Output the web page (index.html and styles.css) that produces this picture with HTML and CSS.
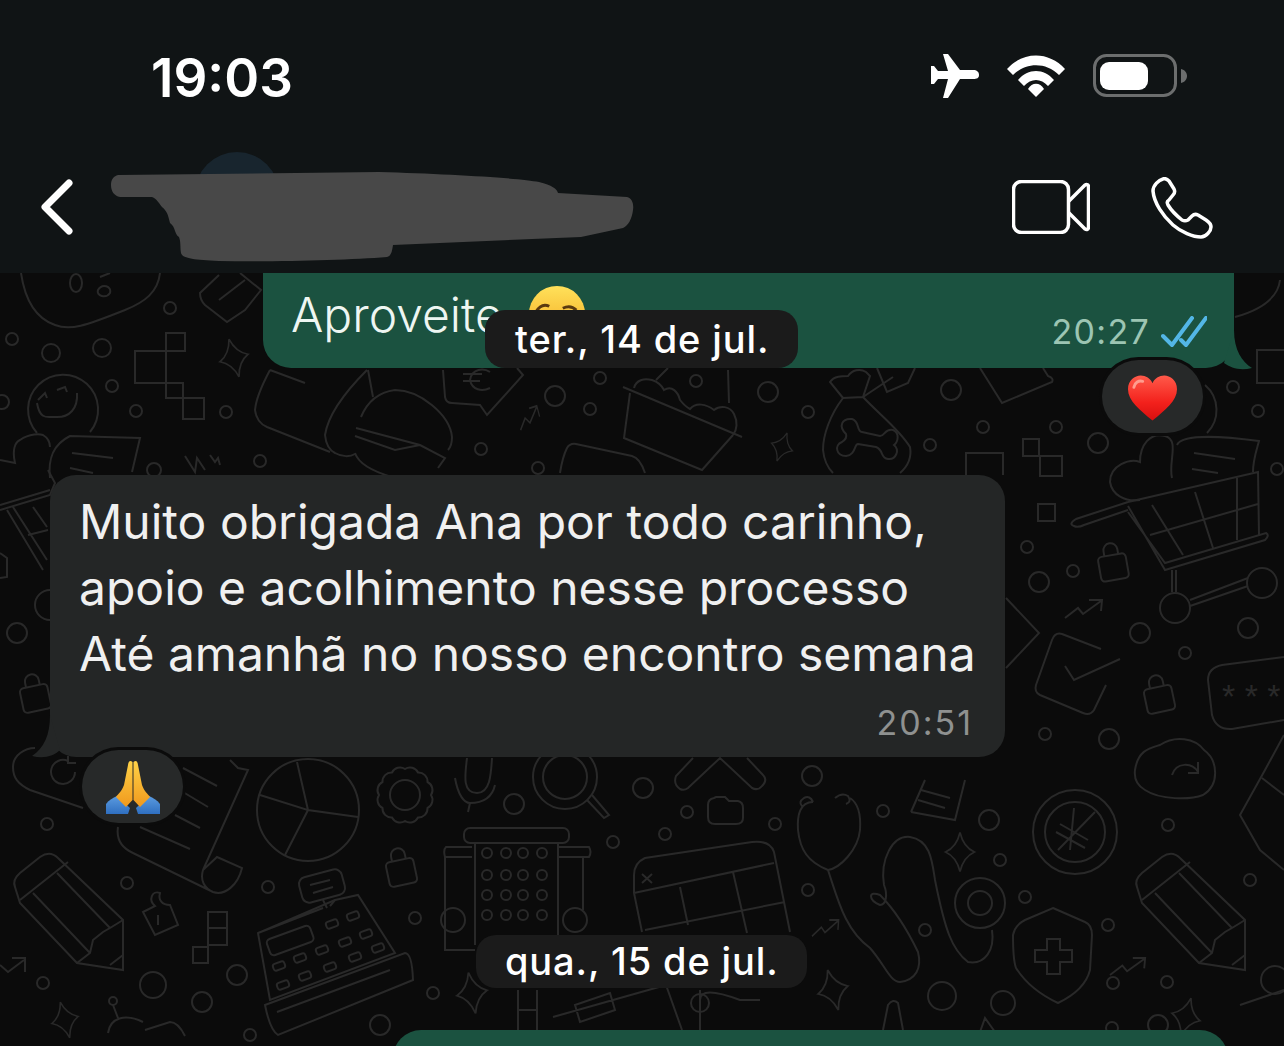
FILE: index.html
```html
<!DOCTYPE html>
<html lang="en">
<head>
    <meta charset="UTF-8">
    <meta name="viewport" content="width=device-width, initial-scale=1.0">
    <title>Chat</title>
    <link rel="stylesheet" href="styles.css">
</head>
<body>
    <div class="phone">
        <header class="top">
            <div class="status">
                <span class="clock">19:03</span>
                <div class="status-icons">
                    <svg class="ic-plane" viewBox="0 0 48 44"><path d="M12 0 17 0 29 16 42 16C46 16 48 18 48 21 48 24 46 25 42 25L29 25 17 44 12 44 17 25 7 25 3 30 0 30 0 12 3 12 7 17 17 17Z"/></svg>
                    <svg class="ic-wifi" viewBox="0 0 58 42"><path d="M0 14C16-4 42-4 58 14L52 20C39 7 19 7 6 20Z"/><path d="M11 25C21 13 37 13 47 25L41 31C34 23 24 23 17 31Z"/><path d="M21 34C25 27 33 27 37 34L29 42Z"/></svg>
                    <svg class="ic-battery" viewBox="0 0 94 44"><rect x="1.5" y="1.5" width="81" height="40" rx="12" fill="none" stroke="#6c6e6e" stroke-width="3"/><rect x="7" y="8" width="48" height="28" rx="9" fill="#fff"/><path d="M88 15C92 16 94 19 94 22 94 25 92 28 88 29Z" fill="#6c6e6e"/></svg>
                </div>
            </div>
            <nav class="nav">
                <svg class="ic-back" viewBox="0 0 34 56"><path d="M29 4 5 28 29 52"/></svg>
                <div class="avatar"></div>
                <div class="nav-icons">
                    <svg class="ic-video" viewBox="0 0 78 54"><rect x="1.5" y="1.5" width="55" height="51" rx="8"/><path d="M57 21 73 5C75 4 76.500 5 76.500 7V47C76.500 49 75 50 73 49L57 33"/></svg>
                    <svg class="ic-call" viewBox="0 0 62 62"><path d="M12 2C8 3 2 8 2 14 3 26 12 39 22 48 30 55 42 60 50 60 55 60 60 54 60 50 60 47 58 45 55 43L47 38C45 37 43 37 41 39L37 43C35 44 33 44 31 43 26 39 20 33 17 28 16 26 16 24 18 23L22 18C24 16 24 14 23 12L18 4C16 2 14 1 12 2Z"/></svg>
                </div>
                <svg class="smear" viewBox="0 0 530 94"><path d="M3 13C3 7 6 4 10 3L271 0C340 2 410 6 431 10 444 13 449 17 450 21L519 25C524 26 526 32 525 38 524 47 520 54 515 56L473 65 285 73C284 80 283 84 279 85 240 88 170 90 111 89 85 88 74 86 73 81 72 75 73 70 71 65 66 62 68 55 62 51 60 44 60 40 54 35 50 30 49 27 44 25L12 25C6 24 3 19 3 13Z"/></svg>
            </nav>
        </header>

        <main class="chat">
            <svg class="wallpaper" viewBox="0 273 1284 773">
                <defs>
                    <g id="lock"><rect x="-14" y="-10" width="28" height="25" rx="4"/><path d="M-7-10V-15A7 7 0 0 1 7-15V-10"/></g>
                    <path id="star" d="M0-23Q4-6 17 0 4 6 0 23-4 6-17 0-4-6 0-23Z"/>
                    <path id="trend" d="M0 18 13 8 18 14 36 1M24 0 37 0 36 11"/>
                    <rect id="key" x="-6" y="-3.500" width="12" height="7" rx="2.500" transform="rotate(-20)"/>
                    <g id="pencil">
                        <path d="M15 887Q12 880 20 873L40 857Q50 850 58 858L123 920 123 970 77 963 20 903Z"/>
                        <path d="M20 900 68 862M33 893 90 953M57 873 110 928M77 963 90 953 93 940 103 932 110 928 123 920M110 965 123 955"/>
                    </g>
                </defs>

                <!-- top strip -->
                <path d="M21 273C25 300 35 318 55 325 70 331 85 326 125 310 145 302 158 292 160 273"/>
                <ellipse cx="76" cy="283" rx="6" ry="9"/>
                <path d="M100 277 110 273M98 290C102 283 112 286 110 293 106 299 96 296 98 290Z"/>
                <path d="M219 275 200 293Q200 300 205 305L227 322 245 310 261 290 240 273M219 300 245 280"/>
                <use href="#star" transform="translate(234 358) rotate(-15) scale(.85)"/>
                <circle cx="170" cy="308" r="6"/><circle cx="12" cy="339" r="6"/><circle cx="51" cy="353" r="9"/><circle cx="102" cy="348" r="9"/>
                <rect x="166" y="333" width="19" height="18"/>
                <rect x="135" y="351" width="31" height="32"/><rect x="166" y="383" width="17" height="15"/><rect x="183" y="398" width="21" height="21"/>
                <circle cx="112" cy="386" r="6"/><circle cx="136" cy="411" r="6"/><circle cx="226" cy="412" r="6"/><circle cx="2" cy="402" r="7"/><circle cx="260" cy="461" r="6"/><circle cx="154" cy="470" r="7"/>
                <path d="M37 433A35 35 0 1 1 90 432M37 403C40 422 50 416 55 417 70 418 78 408 77 393M38 400 45 393 47 398M57 390 65 387 67 392"/>
                <path d="M50 478C48 460 52 445 70 436L140 438 132 472M72 453 113 458M70 468 93 473"/>
                <path d="M0 460 15 463C12 450 15 442 20 440 30 433 40 434 43 435 48 438 50 442 50 447"/>
                <path d="M185 456 195 472 197 458 205 470M210 455 215 462 218 458 220 465"/>
                <path d="M270 370C262 385 256 398 255 410 256 418 260 424 267 427L330 452M270 370 305 383"/>
                <path d="M367 370C345 392 328 415 325 435 326 445 329 450 335 453 342 457 350 457 355 454M368 370 373 397"/>
                <path d="M361 417C368 400 380 392 395 390 420 390 450 415 452 437 452 445 450 448 448 450"/>
                <path d="M356 428 420 445 445 458 438 468M355 436 395 450 420 445M355 453C358 462 368 470 392 477"/>
                <path d="M443 370 445 397Q446 403 452 403L480 405 487 415 523 375 517 368"/>
                <path d="M490 372C484 368 472 368 470 380 472 390 482 392 490 388M463 374H482M463 381H480"/>
                <use href="#trend" transform="translate(515 413) rotate(-18) scale(.62 1)"/>
                <circle cx="555" cy="396" r="10"/><circle cx="600" cy="378" r="6"/><circle cx="590" cy="409" r="6"/><circle cx="481" cy="449" r="6"/><circle cx="696" cy="381" r="6"/><circle cx="768" cy="392" r="10"/><circle cx="808" cy="412" r="6"/><circle cx="538" cy="468" r="6"/>
                <path d="M623 387 742 437M630 393 624 438 702 470 733 435"/>
                <path d="M634 388C636 380 644 378 652 380 658 382 662 386 664 390 672 385 678 392 680 400 684 405 688 408 690 409 696 402 706 404 714 410 720 405 730 406 734 414 738 422 737 430 733 435M656 380 668 368M728 370 729 403"/>
                <path d="M560 473C562 460 565 452 567 448Q570 443 576 444L632 456Q640 458 645 473"/>
                <use href="#star" transform="translate(782 447) rotate(20) scale(.65)"/>

                <!-- money bag with bone -->
                <path d="M843 398 830 382C834 376 842 376 848 376 852 370 860 368 866 372L870 376 863 397 843 398C830 415 823 435 823 450 824 460 828 468 833 473M863 397C880 415 900 430 910 447 912 458 908 466 900 473"/>
                <path d="M863 397 893 377M877 368 887 392 908 383 915 368"/>
                <path d="M846 434C838 426 842 418 852 419 860 421 856 431 862 432L880 436C885 436 885 428 893 430 900 433 898 442 894 445 900 450 896 460 888 459 880 458 884 450 876 447L858 444C854 444 856 455 846 456 836 456 834 445 842 442 845 440 847 437 846 434Z"/>
                <circle cx="951" cy="390" r="10"/><circle cx="930" cy="445" r="6"/><circle cx="983" cy="427" r="6"/><circle cx="1056" cy="427" r="6"/>
                <path d="M966 475V453H1003V475"/>
                <path d="M980 368 1002 403 1052 382Q1054 378 1048 376L1043 368"/>
                <path d="M1235 317C1260 310 1278 298 1280 280"/>
                <path d="M1205 385C1220 398 1220 420 1207 433"/>
                <circle cx="1233" cy="387" r="6"/><circle cx="1258" cy="411" r="6"/>
                <rect x="1257" y="350" width="40" height="33"/>

                <!-- right side, cart -->
                <rect x="1023" y="439" width="16" height="17"/><rect x="1040" y="456" width="22" height="20"/><rect x="1038" y="504" width="17" height="17"/>
                <circle cx="1098" cy="443" r="10"/><circle cx="1277" cy="469" r="6"/><circle cx="1027" cy="547" r="6"/><circle cx="1039" cy="582" r="10"/><circle cx="1073" cy="571" r="6"/><circle cx="1140" cy="633" r="10"/><circle cx="1248" cy="628" r="10"/><circle cx="1185" cy="653" r="6"/><circle cx="1045" cy="734" r="6"/><circle cx="1109" cy="739" r="10"/>
                <path d="M1128 502 1076 519Q1068 524 1074 526 1078 528 1084 525L1128 510"/>
                <path d="M1128 506 1165 570 1265 540Q1270 535 1266 533L1165 563 1128 512M1128 502 1258 472 1259 535M1152 505 1183 555M1195 492 1213 548M1237 478 1237 540M1150 535 1258 504M1172 570V592M1176 570V592"/>
                <circle cx="1175" cy="608" r="15"/><circle cx="1262" cy="583" r="15"/>
                <path d="M1190 600 1248 578M1190 606 1248 586"/>
                <path d="M1172 478C1168 462 1180 440 1165 436 1150 432 1140 445 1140 462 1130 458 1110 465 1110 482 1112 495 1125 502 1140 500"/>
                <path d="M1177 445C1180 438 1200 433 1259 441 1256 452 1253 460 1253 472M1194 453 1235 459M1192 469 1218 473"/>
                <use href="#lock" transform="translate(1113 565) rotate(-10)"/><use href="#lock" transform="translate(1159 697) rotate(-12)"/>
                <use href="#trend" transform="translate(1065 600)"/>
                <path d="M1101 649 1062 634Q1055 632 1052 640L1036 685Q1034 692 1040 695L1083 713Q1090 716 1094 710L1106 685M1065 666 1074 680 1120 659"/>
                <path d="M1006 598 1039 633 1006 668"/>
                <path d="M1284 657 1222 665Q1208 668 1208 680L1212 715Q1216 730 1232 729L1284 720"/>
                <text class="doodle-mark" x="1222" y="708">* * *</text>
                <path d="M1135 770C1138 750 1150 748 1160 745 1175 735 1195 738 1204 750 1218 760 1220 785 1203 795 1190 800 1160 800 1145 790 1136 785 1134 778 1135 770ZM1172 775C1176 762 1192 762 1198 772M1198 762V773H1188"/>
                <path d="M1284 735 1265 770 1240 815 1260 850 1284 870M1262 778 1284 795"/>

                <!-- left side -->
                <path d="M48 470 55 483 50 495 0 510M0 505 50 490M7 510 43 570M13 507 47 560M33 507 47 527M28 535 48 530M0 553 7 558V577L0 578"/>
                <path d="M50 590A15 15 0 0 0 50 620"/>
                <circle cx="17" cy="633" r="10"/>
                <use href="#lock" transform="translate(35 696) rotate(-12)"/>

                <!-- under the grey bubble -->
                <path d="M35 748C25 748 13 755 13 767 13 778 18 784 30 790L83 808"/>
                <path d="M68 761A12 12 0 1 0 75 772M68 756V763H76"/>
                <path d="M183 768 217 786M183 792 208 807M175 815 200 828M140 827 190 849"/>
                <path d="M118 827C116 840 122 848 133 853L213 892C225 896 238 885 242 868L217 857 203 870C200 880 204 888 213 892M203 870 248 770 238 768 230 760"/>
                <circle cx="308" cy="810" r="51"/><path d="M297 762 308 810 358 817M260 795 308 810 285 855"/>
                <circle cx="405" cy="795" r="15"/>
                <path d="M431 795a9 9 0 0 1-3.500 13a9 9 0 0 1-9.500 9.500a9 9 0 0 1-13 3.500a9 9 0 0 1-13-3.500a9 9 0 0 1-9.500-9.500a9 9 0 0 1-3.500-13a9 9 0 0 1 3.500-13a9 9 0 0 1 9.500-9.500a9 9 0 0 1 13-3.500a9 9 0 0 1 13 3.500a9 9 0 0 1 9.500 9.500a9 9 0 0 1 3.500 13Z"/>
                <use href="#pencil"/>
                <use href="#lock" transform="translate(401 870) rotate(-12)"/>
                <path d="M160 893C152 890 148 900 155 906L143 912 155 935 178 925 170 905C162 905 158 900 160 893ZM158 915V925"/>
                <rect x="208" y="912" width="19" height="16"/><rect x="208" y="928" width="19" height="17"/><rect x="193" y="947" width="15" height="16"/>
                <path d="M0 965 8 972 24 960M12 958H25V972"/>
                <circle cx="47" cy="824" r="6"/><circle cx="127" cy="883" r="6"/><circle cx="268" cy="887" r="6"/><circle cx="415" cy="918" r="6"/><circle cx="43" cy="983" r="6"/><circle cx="153" cy="985" r="13"/><circle cx="237" cy="975" r="10"/><circle cx="202" cy="1002" r="10"/><circle cx="250" cy="1035" r="6"/><circle cx="380" cy="1025" r="10"/><circle cx="433" cy="993" r="6"/><circle cx="113" cy="1001" r="4"/>
                <use href="#star" transform="translate(65 1020) rotate(-15) scale(.8)"/>
                <path d="M108 1033C110 1018 125 1013 143 1022M113 1005 118 1018M145 1030 170 1022Q178 1022 185 1036"/>

                <!-- cash register -->
                <path d="M258 933 323 908M335 900 358 895 395 953 270 1000 258 933Z"/>
                <rect x="300" y="873" width="44" height="26" rx="7" transform="rotate(-15 322 886)"/>
                <path d="M310 885 330 880M313 893 333 887M323 900 327 908M335 900 330 906"/>
                <rect x="267" y="932" width="46" height="17" rx="4" transform="rotate(-20 290 940)"/>
                <path d="M265 1005 405 953Q412 953 413 980L278 1035Q270 1030 265 1005ZM277 1012 390 970"/>
                <use href="#key" x="353" y="916"/><use href="#key" x="332" y="924"/><use href="#key" x="366" y="934"/><use href="#key" x="345" y="942"/><use href="#key" x="322" y="950"/><use href="#key" x="300" y="958"/><use href="#key" x="279" y="966"/><use href="#key" x="378" y="948"/><use href="#key" x="355" y="957"/><use href="#key" x="330" y="967"/><use href="#key" x="305" y="976"/><use href="#key" x="283" y="985"/>

                <!-- middle -->
                <path d="M467 758C465 775 462 793 477 793 490 793 491 775 492 758M455 778C458 795 464 803 470 803 482 803 492 798 495 785M470 803 468 812"/>
                <circle cx="514" cy="804" r="10"/>
                <circle cx="565" cy="777" r="32"/><circle cx="565" cy="777" r="22"/><path d="M587 800 604 818 609 815 592 795"/>
                <circle cx="643" cy="788" r="10"/>
                <path d="M693 758 676 776Q673 784 680 789 684 791 688 788L720 758 752 788Q758 791 762 786 768 780 763 775L747 758"/>
                <circle cx="687" cy="812" r="6"/><circle cx="665" cy="834" r="6"/><circle cx="775" cy="824" r="6"/><circle cx="812" cy="776" r="10"/><circle cx="613" cy="842" r="6"/>
                <path d="M708 805Q708 799 714 798L716 797H725L729 801H738Q743 802 743 808V818Q743 824 736 824H715Q708 824 708 817Z"/>
                <rect x="464" y="828" width="105" height="15" rx="6"/>
                <path d="M475 843V945M558 843V935M472 857H445Q443 850 446 847H472M558 847H589Q592 852 589 857H558M445 857V950H475M583 857V910"/>
                <g class="windows">
                    <circle cx="487" cy="853" r="5"/><circle cx="506" cy="853" r="5"/><circle cx="523" cy="853" r="5"/><circle cx="542" cy="853" r="5"/>
                    <circle cx="487" cy="875" r="5"/><circle cx="506" cy="875" r="5"/><circle cx="523" cy="875" r="5"/><circle cx="542" cy="875" r="5"/>
                    <circle cx="487" cy="895" r="5"/><circle cx="506" cy="895" r="5"/><circle cx="523" cy="895" r="5"/><circle cx="542" cy="895" r="5"/>
                    <circle cx="487" cy="915" r="5"/><circle cx="506" cy="915" r="5"/><circle cx="523" cy="915" r="5"/><circle cx="542" cy="915" r="5"/>
                </g>
                <circle cx="453" cy="920" r="12"/><circle cx="575" cy="920" r="12"/>
                <path d="M642 932 634 893V875Q634 863 645 858L752 842Q770 840 774 852L790 932M634 893 774 863M645 930 785 902M680 887 688 925M733 872 747 933M642 874 652 883M652 874 642 883"/>
                <use href="#trend" transform="translate(812 920) scale(.72 .9)"/>
                <path d="M813 802C800 802 797 815 798 830 800 850 808 862 828 870 840 868 858 850 860 830 861 815 858 803 850 798M813 802Q810 795 804 798 798 802 802 806M835 798Q842 792 848 796 852 802 846 804"/>
                <path d="M828 870C838 900 845 930 870 948 885 965 890 982 900 982 916 980 922 968 918 952 905 925 890 905 880 895 868 890 868 900 880 905 886 905 888 895 884 885 880 860 892 835 910 837 930 840 932 860 935 880 945 930 952 950 968 962 985 965 995 950 992 930"/>
                <circle cx="980" cy="903" r="25"/><circle cx="980" cy="903" r="12"/>
                <path d="M911 812 925 780M911 812 955 820 965 780M921 790 950 798M918 800 945 808"/>
                <circle cx="1075" cy="832" r="42"/><circle cx="1075" cy="832" r="30"/>
                <path d="M1074 808 1070 850M1095 812 1058 850M1060 824 1088 840M1056 832 1085 848"/>
                <use href="#star" transform="translate(960 852) scale(.85)"/><use href="#star" transform="translate(833 990) rotate(-15) scale(.9)"/><use href="#star" transform="translate(472 993) rotate(-10) scale(.9)"/><use href="#star" transform="translate(1186 1017) rotate(15) scale(.85)"/>
                <path d="M1053 908 1085 922Q1092 925 1092 935L1090 970Q1085 990 1058 1003 1030 990 1016 968 1013 960 1013 935 1015 925 1025 920ZM1047 939H1060V950H1072V962H1060V974H1047V962H1035V950H1047Z"/>
                <use href="#trend" transform="translate(1110 958) scale(.95)"/>
                <use href="#pencil" transform="translate(1122 0)"/>
                <circle cx="883" cy="811" r="6"/><circle cx="989" cy="820" r="10"/><circle cx="1000" cy="860" r="6"/><circle cx="1168" cy="825" r="6"/><circle cx="808" cy="890" r="6"/><circle cx="925" cy="930" r="6"/><circle cx="1025" cy="897" r="6"/><circle cx="1108" cy="925" r="6"/><circle cx="1250" cy="880" r="6"/><circle cx="1167" cy="982" r="6"/><circle cx="1003" cy="1003" r="12"/><circle cx="1113" cy="983" r="6"/><circle cx="1275" cy="980" r="14"/>
                <path d="M553 1017 666 985 682 1030M518 990V1032M537 990V1032M518 1010H537M575 1005 610 993 615 1010 580 1022ZM700 990V1032M760 1000H740Q700 985 700 1000M883 1030 888 1005Q893 998 898 1003L903 1030M980 1032 985 1018 995 1032M1240 1005 1284 990"/>
                <circle cx="700" cy="1003" r="9"/><circle cx="942" cy="996" r="14"/><circle cx="1112" cy="1028" r="6"/><circle cx="1158" cy="1025" r="10"/>
            </svg>

            <div class="msg msg-out msg-first">
                <span class="msg-text">Aproveite</span>
                <svg class="emoji-face" viewBox="0 0 60 60">
                    <defs><linearGradient id="faceFill" x1="0" y1="0" x2="0" y2="1"><stop offset="0" stop-color="#ffe15a"/><stop offset="1" stop-color="#f3a51c"/></linearGradient></defs>
                    <circle cx="30" cy="30" r="29" fill="url(#faceFill)"/>
                    <path d="M8 28Q14 18 22 22M36 24Q44 20 50 26" fill="none" stroke="#5a3a10" stroke-width="3"/>
                </svg>
                <span class="msg-meta msg-meta-out">20:27
                    <svg class="ticks" viewBox="0 0 46 32"><path d="M2 20 11 29 31 2M20 24 25 29 45 2"/></svg>
                </span>
                <svg class="tail tail-out" viewBox="0 0 28 40"><path d="M10 0C10 20 18 32 28 38 16 41 7 38 0 33Z"/></svg>
                <div class="date-pill date-first">ter., 14 de jul.</div>
                <div class="reaction reaction-out">
                    <svg class="emoji-heart" viewBox="0 0 50 46">
                        <defs><linearGradient id="heartFill" x1="0" y1="0" x2="0" y2="1"><stop offset="0" stop-color="#ff5a4a"/><stop offset=".6" stop-color="#f3211c"/><stop offset="1" stop-color="#d80f0f"/></linearGradient></defs>
                        <path d="M25 46C12 35 0 26 0 14 0 5 7 0 13 0 18 0 23 3 25 8 27 3 32 0 37 0 43 0 50 5 50 14 50 26 38 35 25 46Z" fill="url(#heartFill)"/>
                        <path d="M6 12C7 7 11 5 15 6" fill="none" stroke="#ff9c8e" stroke-width="3" stroke-linecap="round"/>
                    </svg>
                </div>
            </div>

            <div class="msg msg-in">
                <p class="msg-body">Muito obrigada Ana por todo carinho,<br>apoio e acolhimento nesse processo<br>Até amanhã no nosso encontro semana</p>
                <span class="msg-meta msg-meta-in">20:51</span>
                <svg class="tail tail-in" viewBox="0 0 28 44"><path d="M18 0C18 20 12 33 0 41 12 44 22 41 28 35Z"/></svg>
                <div class="reaction reaction-in">
                    <svg class="emoji-hands" viewBox="0 0 54 54">
                        <defs>
                            <linearGradient id="handFill" x1="0" y1="0" x2="0" y2="1"><stop offset="0" stop-color="#ffd247"/><stop offset="1" stop-color="#f0991d"/></linearGradient>
                            <linearGradient id="sleeveFill" x1="0" y1="0" x2="0" y2="1"><stop offset="0" stop-color="#5b9be0"/><stop offset="1" stop-color="#2f6fc0"/></linearGradient>
                        </defs>
                        <path d="M0 54V44C3 40 7 38 11 36L24 48 22 54Z" fill="url(#sleeveFill)"/>
                        <path d="M54 54V44C51 40 47 38 43 36L30 48 32 54Z" fill="url(#sleeveFill)"/>
                        <path d="M26.500 2C24 0 22.500 1 22 5L18 25C16 31 12 34 10 37L20 47 26.500 40Z" fill="url(#handFill)"/>
                        <path d="M27.500 2C30 0 31.500 1 32 5L36 25C38 31 42 34 44 37L34 47 27.500 40Z" fill="url(#handFill)"/>
                    </svg>
                </div>
            </div>

            <div class="date-pill date-second">qua., 15 de jul.</div>

            <div class="msg msg-out msg-last"></div>
        </main>
    </div>
</body>
</html>
```

FILE: styles.css
```css
* {
    margin: 0;
    padding: 0;
    box-sizing: border-box;
}
body {
    font-family: "Inter", "Liberation Sans", sans-serif;
    background-color: #0b0b0b;
}
.phone {
    width: 1284px;
    height: 1046px;
    overflow: hidden;
    display: flex;
    flex-direction: column;
}
.top {
    height: 273px;
    background-color: #101415;
    flex-shrink: 0;
}
.status {
    height: 152px;
    padding: 0 97px 0 151px;
    display: flex;
    justify-content: space-between;
    align-items: flex-start;
}
.clock {
    margin-top: 47px;
    font-size: 53px;
    line-height: 62px;
    font-weight: 600;
    color: #fff;
}
.status-icons {
    margin-top: 54px;
    display: flex;
    align-items: center;
    gap: 28px;
}
.status-icons svg {
    fill: #fff;
    display: block;
}
.ic-plane {
    width: 48px;
    height: 44px;
}
.ic-wifi {
    width: 58px;
    height: 42px;
}
.ic-battery {
    width: 94px;
    height: 44px;
}
.nav {
    position: relative;
    height: 121px;
    display: flex;
    padding-left: 40px;
}
.ic-back {
    width: 34px;
    height: 56px;
    margin-top: 27px;
    fill: none;
    stroke: #fff;
    stroke-width: 7px;
    stroke-linecap: round;
    stroke-linejoin: round;
}
.avatar {
    width: 84px;
    height: 84px;
    margin-left: 121px;
    border-radius: 50%;
    background-color: #18252e;
}
.nav-icons {
    margin-left: auto;
    margin-right: 71px;
    display: flex;
    gap: 61px;
    align-items: flex-start;
}
.nav-icons svg {
    display: block;
    fill: none;
    stroke: #fff;
    stroke-width: 3.500px;
    stroke-linejoin: round;
    stroke-linecap: round;
}
.ic-video {
    width: 78px;
    height: 54px;
    margin-top: 28px;
}
.ic-call {
    width: 62px;
    height: 62px;
    margin-top: 25px;
}
.smear {
    position: absolute;
    left: 108px;
    top: 20px;
    width: 530px;
    height: 94px;
    fill: #484848;
}
.chat {
    position: relative;
    flex: 1;
    overflow: hidden;
    display: flex;
    flex-direction: column;
}
.wallpaper {
    position: absolute;
    left: 0;
    top: 0;
    width: 1284px;
    height: 773px;
    fill: none;
    stroke: #292929;
    stroke-width: 2px;
}
.doodle-mark {
    font-family: "Liberation Sans", sans-serif;
    font-size: 34px;
    fill: #292929;
    stroke: none;
}
.msg {
    position: relative;
    flex-shrink: 0;
}
.msg-out {
    background-color: #1b5240;
}
.msg-in {
    background-color: #242626;
}
.msg-first {
    margin-left: 263px;
    width: 971px;
    height: 95px;
    padding: 14px 30px 0 28px;
    border-radius: 0 0 28px 28px;
    display: flex;
    align-items: flex-start;
}
.msg-text {
    font-size: 48px;
    line-height: 56px;
    font-weight: 350;
    color: #eef6f2;
}
.emoji-face {
    width: 58px;
    height: 58px;
    margin-left: 25px;
    margin-top: -2px;
}
.msg-meta {
    font-size: 34px;
    line-height: 40px;
}
.msg-meta-out {
    margin-left: auto;
    margin-top: 25px;
    margin-right: -3px;
    letter-spacing: 1.300px;
    color: #9cc5b3;
    display: flex;
    align-items: center;
    gap: 11px;
}
.ticks {
    width: 46px;
    height: 32px;
    fill: none;
    stroke: #53b6e6;
    stroke-width: 4px;
    stroke-linecap: round;
    stroke-linejoin: round;
}
.tail {
    position: absolute;
}
.tail-out {
    right: -18px;
    bottom: -2px;
    width: 28px;
    height: 40px;
    fill: #1b5240;
}
.tail-in {
    left: -18px;
    bottom: -2px;
    width: 28px;
    height: 44px;
    fill: #242626;
}
.date-pill {
    background-color: #1b1b1b;
    color: #fff;
    font-size: 38px;
    font-weight: 500;
    letter-spacing: .88px;
    white-space: nowrap;
}
.date-first {
    position: absolute;
    left: 222px;
    top: 37px;
    height: 58px;
    padding: 0 29px 0 30px;
    border-radius: 20px;
    line-height: 58px;
}
.date-second {
    align-self: flex-start;
    position: relative;
    margin: 178px 0 0 476px;
    height: 55px;
    padding: 0 28px 0 29px;
    border-radius: 20px;
    line-height: 53px;
}
.reaction {
    position: absolute;
    width: 101px;
    height: 73px;
    border-radius: 37px;
    background-color: #272929;
    box-shadow: 0 0 0 3px #0b0b0b;
    display: flex;
    align-items: center;
    justify-content: center;
}
.reaction-out {
    right: 31px;
    bottom: -65px;
}
.reaction-in {
    left: 32px;
    bottom: -66px;
}
.emoji-heart {
    width: 49px;
    height: 46px;
    margin-top: 2px;
}
.emoji-hands {
    width: 54px;
    height: 54px;
}
.msg-in {
    margin: 107px 0 0 50px;
    width: 955px;
    height: 282px;
    padding: 14px 32px 0 29px;
    border-radius: 26px;
}
.msg-body {
    font-size: 48px;
    line-height: 66px;
    color: #f0f0f0;
    white-space: nowrap;
}
.msg-meta-in {
    display: block;
    text-align: right;
    margin-top: 16px;
    letter-spacing: 2px;
    color: #8f9190;
}
.msg-last {
    margin: 42px 0 0 393px;
    width: 835px;
    height: 60px;
    border-radius: 28px 28px 0 0;
}
```
